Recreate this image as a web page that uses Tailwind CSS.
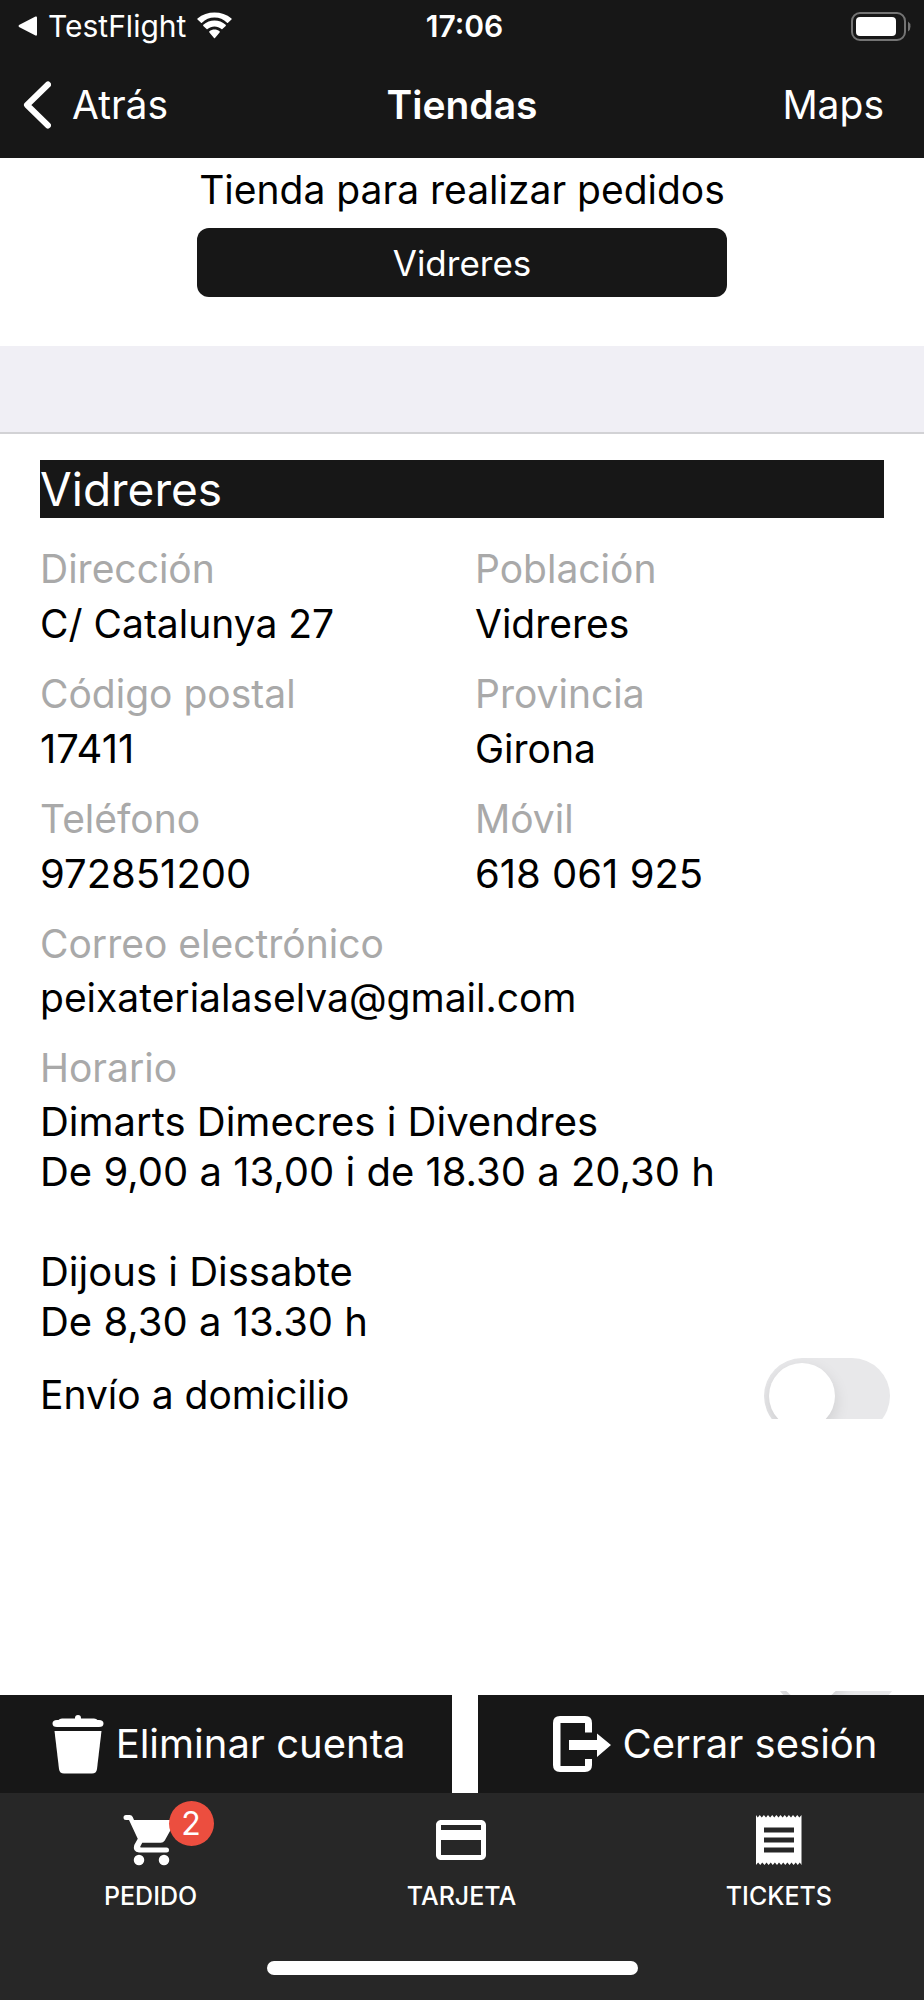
<!DOCTYPE html>
<html lang="es">
<head>
  <meta charset="UTF-8" />
  <meta name="viewport" content="width=device-width, initial-scale=1.0"/>
  <title>Tiendas</title>
  <script src="https://cdn.jsdelivr.net/npm/@tailwindcss/browser@4"></script>
</head>
<body class="bg-white min-h-screen flex flex-col font-['Inter','Liberation_Sans',sans-serif] text-[39px] leading-[50px] text-black">

<header class="bg-[#171717] text-white">
  <!-- Barra de estado -->
  <div class="h-[52px] pl-[18px] pr-[13px] grid grid-cols-[1fr_auto_1fr] items-center text-[30px]">
    <div class="flex items-center gap-[10px]">
      <svg class="w-[20px] h-[20px]" viewBox="0 0 20 20" fill="currentColor"><path d="M1 9 17.500 .5Q19 0 19 1.500V18.500Q19 20 17.500 19.500L1 11Q0 10 1 9z"/></svg>
      <span>TestFlight</span>
      <svg class="w-[37px] h-[28px]" viewBox="0 0 37 28" fill="currentColor">
        <path d="M18.500 5.600c4.800 0 9.200 1.900 12.500 5.100.3.300.7.300 1 0l3.500-3.200c.3-.3.300-.8 0-1.100C26 -1.500 11-1.500 1.500 6.400c-.3.300-.3.800 0 1.100L5 10.700c.3.300.7.300 1 0 3.300-3.200 7.700-5.100 12.500-5.100z" />
        <path d="M18.500 14.400c2.600 0 5 1 6.900 2.700.3.300.7.300 1 0l3.300-3.200c.3-.3.300-.8 0-1.100-6.200-5.700-16.200-5.700-22.400 0-.3.300-.3.800 0 1.100l3.300 3.200c.3.300.7.300 1 0 1.900-1.700 4.300-2.700 6.900-2.700z"/>
        <path d="M23.600 20.400c.3-.3.300-.8 0-1.100-2.900-2.500-7.300-2.500-10.200 0-.3.300-.3.800 0 1.100l4.600 5.600c.3.300.7.300 1 0l4.600-5.600z"/>
      </svg>
    </div>
    <span class="font-semibold">17:06</span>
    <svg class="justify-self-end w-[60px] h-[29px]" viewBox="0 0 60 29">
      <rect x="1" y="1" width="53" height="27" rx="8" fill="none" stroke="#747474" stroke-width="2"/>
      <rect x="5" y="5" width="40" height="19" rx="4" fill="#fff"/>
      <path d="M57 9.500q2.500 1.500 2.500 5t-2.500 5z" fill="#747474"/>
    </svg>
  </div>
  <nav class="h-[106px] px-[23px] grid grid-cols-[1fr_auto_1fr] items-center">
    <a href="#" class="flex items-center gap-[21px]">
      <svg class="w-[28px] h-[48px]" viewBox="0 0 28 48" fill="none" stroke="currentColor" stroke-width="6" stroke-linecap="round" stroke-linejoin="round"><path d="M25 3.500 4 24l21 20.500"/></svg>
      Atrás
    </a>
    <h1 class="font-semibold">Tiendas</h1>
    <a href="#" class="justify-self-end pr-[17px]">Maps</a>
  </nav>
</header>

<main class="grow flex flex-col">
  <section class="pt-[7px] pb-[49px] flex justify-center">
    <div class="flex flex-col gap-[13px]">
      <p class="px-[2px]">Tienda para realizar pedidos</p>
      <button type="button" class="h-[69px] rounded-[12px] bg-[#171717] text-white text-[35px]">Vidreres</button>
    </div>
  </section>

  <div class="h-[88px] bg-[#f0eff5] border-b-2 border-[#d2d2d5]"></div>

  <section class="px-[40px] pt-[26px]">
    <h2 class="bg-[#171717] text-white text-[46px] leading-[58px]">Vidreres</h2>

    <dl class="mt-[26px] grid grid-cols-2 gap-x-[26px] gap-y-[20px]">
      <div class="flex flex-col gap-[5px]">
        <dt class="text-[#a9a9a9]">Dirección</dt>
        <dd>C/ Catalunya 27</dd>
      </div>
      <div class="flex flex-col gap-[5px]">
        <dt class="text-[#a9a9a9]">Población</dt>
        <dd>Vidreres</dd>
      </div>
      <div class="flex flex-col gap-[5px]">
        <dt class="text-[#a9a9a9]">Código postal</dt>
        <dd class="text-[40px]">17411</dd>
      </div>
      <div class="flex flex-col gap-[5px]">
        <dt class="text-[#a9a9a9]">Provincia</dt>
        <dd>Girona</dd>
      </div>
      <div class="flex flex-col gap-[5px]">
        <dt class="text-[#a9a9a9]">Teléfono</dt>
        <dd class="text-[40px]">972851200</dd>
      </div>
      <div class="flex flex-col gap-[5px]">
        <dt class="text-[#a9a9a9]">Móvil</dt>
        <dd class="text-[40px]">618 061 925</dd>
      </div>
      <div class="col-span-2 flex flex-col gap-[4px]">
        <dt class="text-[#a9a9a9]">Correo electrónico</dt>
        <dd>peixaterialaselva@gmail.com</dd>
      </div>
      <div class="col-span-2 flex flex-col gap-[4px]">
        <dt class="text-[#a9a9a9]">Horario</dt>
        <dd class="text-[40px]">Dimarts Dimecres i Divendres<br>De 9,00 a 13,00 i de 18.30 a 20,30 h<br><br>Dijous i Dissabte<br>De 8,30 a 13.30 h</dd>
      </div>
    </dl>
  </section>

  <div class="mt-[11px] h-[61px] pl-[40px] pr-[34px] flex justify-between items-start overflow-hidden">
    <label for="envio" class="pt-[12px]">Envío a domicilio</label>
    <input type="checkbox" role="switch" id="envio" class="appearance-none shrink-0 w-[126px] h-[76px] p-[5px] rounded-full overflow-hidden bg-[#e8e8ea] before:block before:size-[66px] before:rounded-full before:bg-white before:shadow-[0_6px_16px_rgba(0,0,0,0.12)]">
  </div>

  <!-- Siguiente opción, recortada por la barra de acciones -->
  <div class="mt-auto h-[4px] pr-[25px] flex justify-end items-end overflow-hidden">
    <input type="checkbox" role="switch" aria-label="Otra opción" class="appearance-none shrink-0 -mb-[12px] w-[126px] h-[76px] p-[5px] rounded-full overflow-hidden bg-[#e8e8ea] before:block before:size-[66px] before:rounded-full before:bg-white before:shadow-[0_6px_16px_rgba(0,0,0,0.12)]">
  </div>
</main>

<footer class="text-white">
  <div class="h-[98px] grid grid-cols-[452fr_446fr] gap-[26px] text-[40px]">
    <button type="button" class="bg-[#171717] pl-[5px] flex items-center justify-center gap-[12px]">
      <svg class="w-[52px] h-[60px]" viewBox="0 0 52 60" fill="currentColor">
        <path d="M23 4a3 3 0 0 1 6 0v.5h13q2.500 0 3.500 1.500h1.500q4.500 0 4.500 3.500T47 13H5Q.5 13 .5 9.500T5 6h1.500q1-1.500 3.500-1.500h13z"/>
        <path d="M2.500 17h47l-4.500 38q-.6 4.500-5 4.500H12q-4.400 0-5-4.500z"/>
      </svg>
      Eliminar cuenta
    </button>
    <button type="button" class="bg-[#171717] pl-[28px] flex items-center justify-center gap-[12px]">
      <svg class="w-[58px] h-[58px]" viewBox="0 0 58 58" fill="currentColor">
        <path d="M7 1h25q7 0 7 7v9.500h-7V8H7.500v43H32v-7h7v6q0 7-7 7H7q-7 0-7-7V8q0-7 7-7z"/>
        <path d="M16 25h28v-6.500L58 30 44 42v-7H16z"/>
      </svg>
      Cerrar sesión
    </button>
  </div>

  <div class="h-[207px] bg-[#272727] flex flex-col justify-between">
    <nav class="pt-[17px] pl-[104px] pr-[92px] flex justify-between text-[25px] leading-[30px] font-medium">
      <a href="#" class="flex flex-col items-center gap-[11px]">
        <span class="relative">
          <svg class="size-[60px]" viewBox="0 0 24 24" fill="currentColor"><circle cx="7.200" cy="20" r="2.100"/><circle cx="17.200" cy="20" r="2.100"/><path d="M2 2h1.500q.8 0 1.200.8L5.200 4H20.500q1.300 0 .9 1.200L17.500 12.200q-.6.900-1.600.9H8.500L7.700 14.600q-.1.400.3.400h10.200q1 0 1 1t-1 1H7.200q-2.700-.3-1.900-3l1.400-2.500L3.200 4H2Q1 4 1 3t1-1z"/></svg>
          <span class="absolute -top-[9px] left-[48px] size-[45px] rounded-full bg-[#ec4e3f] text-[32px] leading-[45px] font-normal text-center">2</span>
        </span>
        PEDIDO
      </a>
      <a href="#" class="flex flex-col items-center gap-[11px]">
        <svg class="size-[60px]" viewBox="0 0 24 24" fill="currentColor"><path d="M20 4H4c-1.110 0-1.990.89-1.990 2L2 18c0 1.110.89 2 2 2h16c1.110 0 2-.89 2-2V6c0-1.110-.89-2-2-2zm0 14H4v-6h16v6zm0-10H4V6h16v2z"/></svg>
        TARJETA
      </a>
      <a href="#" class="flex flex-col items-center gap-[11px]">
        <svg class="size-[60px]" viewBox="0 0 24 24" fill="currentColor"><path d="M18 17H6v-2h12v2zm0-4H6v-2h12v2zm0-4H6V7h12v2zM2.800 22l.85-1 .85 1 .8-1 .9 1 .8-1 .85 1 .85-1 .8 1 .85-1 .85 1 .8-1 .85 1 .85-1 .8 1 .85-1 .85 1 .8-1 .85 1 .85-1 .8 1 .8-1 .7 1V2l-.85 1-.85-1-.8 1-.9-1-.8 1-.85-1-.85 1-.8-1-.85 1-.85-1-.8 1-.85-1-.85 1-.8-1-.85 1-.85-1-.8 1-.85-1-.85 1-.8-1-.8 1-.7-1z"/></svg>
        TICKETS
      </a>
    </nav>
    <div class="pr-[19px] pb-[25px] flex justify-center">
      <div class="w-[41%] h-[14px] rounded-full bg-white"></div>
    </div>
  </div>
</footer>

</body>
</html>
